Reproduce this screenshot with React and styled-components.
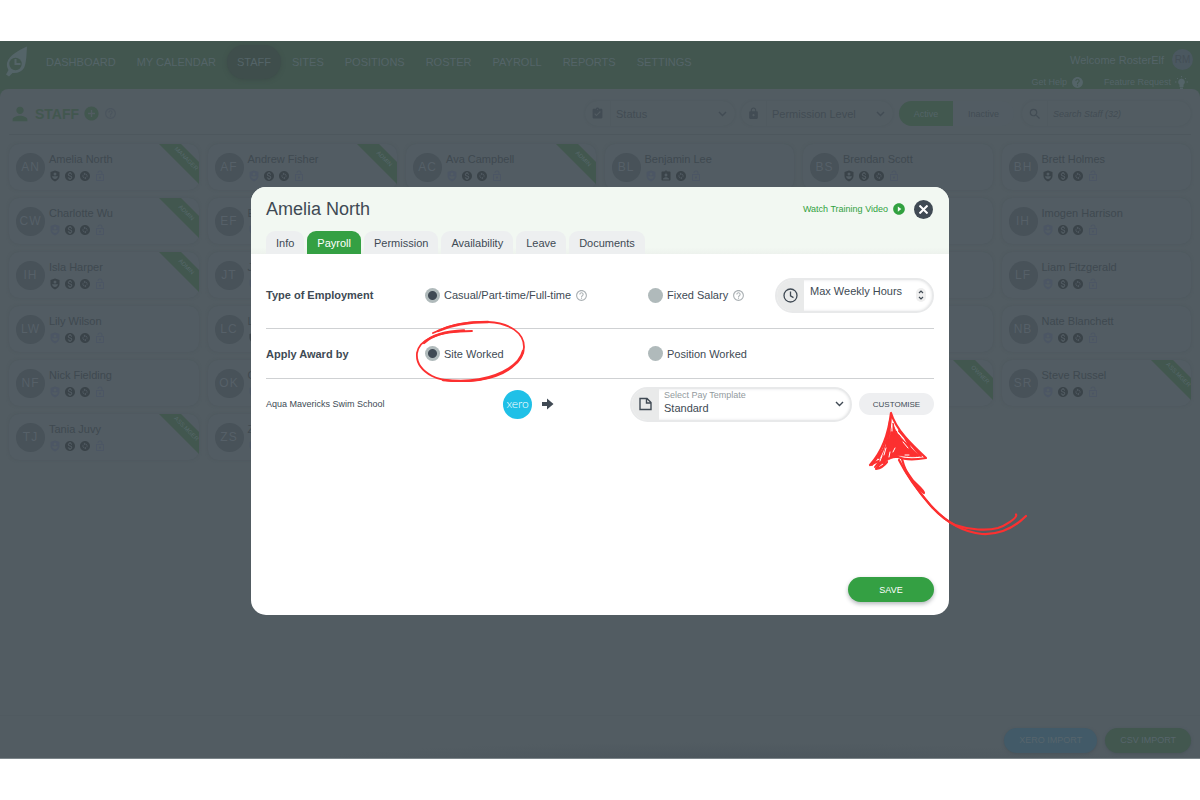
import { useState } from "react";
import styled, { createGlobalStyle } from "styled-components";
import {
  MdPerson,
  MdAddCircle,
  MdHelpOutline,
  MdHelp,
  MdAssignmentTurnedIn,
  MdAssignmentInd,
  MdLock,
  MdLockOpen,
  MdSearch,
  MdMonetizationOn,
  MdChangeCircle,
  MdPlayCircleFilled,
} from "react-icons/md";

const GlobalStyle = createGlobalStyle`
  * {
    box-sizing: border-box;
  }
  body {
    margin: 0;
    background-color: #fff;
    font-family: "Liberation Sans", Arial, sans-serif;
    font-size: 11px;
  }
  button, input, select {
    font-family: inherit;
  }
`;

const Page = styled.div`
  position: relative;
  min-height: 100vh;
  padding: 41px 0;
  display: flex;
  flex-direction: column;
`;

const Shell = styled.div`
  flex: 1;
  display: flex;
  flex-direction: column;
  background-color: #42564f;
  border-bottom: 1px solid #7c858a;
`;

const Header = styled.header`
  height: 48px;
  display: flex;
  justify-content: space-between;
  color: #546468;
`;

const HeaderLeft = styled.div`
  display: flex;
  align-items: flex-start;
  padding: 4px 0 0 5px;
`;

const Nav = styled.nav`
  display: flex;
  gap: 1px;
  margin-left: 7px;
`;

const NavLink = styled.a`
  height: 34px;
  padding: 0 10px;
  border-radius: 17px;
  display: flex;
  align-items: center;
  color: inherit;
  text-decoration: none;
  white-space: nowrap;
  background-color: ${(props) => (props.$active ? "#3f4e4c" : "transparent")};
  box-shadow: ${(props) => (props.$active ? "0 1px 4px #3d4d49" : "none")};
`;

const HeaderRight = styled.div`
  display: flex;
  flex-direction: column;
  align-items: flex-end;
  gap: 6px;
  padding: 8px 7px 0 0;
`;

const Welcome = styled.div`
  display: flex;
  align-items: center;
  gap: 8px;
`;

const UserBadge = styled.div`
  width: 21px;
  height: 21px;
  border-radius: 50%;
  display: flex;
  align-items: center;
  justify-content: center;
  background-color: #4b5860;
  color: #434e55;
  font-size: 10px;
`;

const HelpLinks = styled.div`
  display: flex;
  gap: 20px;
  padding-right: 5px;
`;

const HelpLink = styled.a`
  display: flex;
  align-items: center;
  gap: 4px;
  height: 12px;
  color: inherit;
  font-size: 9px;
  text-decoration: none;
`;

const Content = styled.main`
  flex: 1;
  display: flex;
  flex-direction: column;
  border-radius: 8px 8px 0 0;
  background-color: #525c62;
`;

const Toolbar = styled.div`
  height: 46px;
  margin: 0 9px;
  padding-top: 4px;
  display: flex;
  align-items: center;
  border-bottom: 1px solid #4d575d;
`;

const PageTitle = styled.h1`
  flex: 1;
  margin: 0;
  display: flex;
  align-items: center;
  gap: 4px;
  color: #42574f;
  font-size: 14px;
`;

const Filters = styled.div`
  display: flex;
  align-items: center;
  gap: 6px;
`;

const Filter = styled.label`
  width: ${(props) => props.$width};
  height: 25px;
  padding-right: 8px;
  display: flex;
  align-items: center;
  border-radius: 13px;
  box-shadow: 0 0 2px #4d575d;
  color: #424c54;
`;

const FilterIcon = styled.span`
  width: 26px;
  height: 25px;
  flex-shrink: 0;
  display: flex;
  align-items: center;
  justify-content: center;
  border-right: 1px solid #505a60;
`;

const FilterSelect = styled.select`
  flex: 1;
  min-width: 0;
  padding: 0 5px;
  border: 0;
  appearance: none;
  background: transparent;
  color: inherit;
  font-size: 11px;
`;

const Toggle = styled.div`
  display: flex;
  height: 25px;
  margin-right: 2px;
`;

const ToggleButton = styled.button`
  width: ${(props) => (props.$active ? "54px" : "61px")};
  border: 0;
  border-radius: ${(props) => (props.$active ? "13px 0 0 13px" : "0 13px 13px 0")};
  background-color: ${(props) => (props.$active ? "#42584f" : "#525c63")};
  color: ${(props) => (props.$active ? "#546468" : "#424c54")};
  font-size: 9px;
`;

const SearchInput = styled.input`
  flex: 1;
  min-width: 0;
  padding: 0 5px;
  border: 0;
  background: transparent;
  font-size: 9px;
  font-style: italic;
  &::placeholder {
    color: #424c54;
    opacity: 1;
  }
`;

const StaffGrid = styled.div`
  display: grid;
  grid-template-columns: repeat(6, 1fr);
  gap: 8px 9px;
  padding: 9px 9px 0;
`;

const Card = styled.article`
  position: relative;
  height: 46px;
  padding: 0 0 0 7px;
  display: flex;
  align-items: center;
  gap: 4px;
  border-radius: 10px;
  background-color: #525c63;
  box-shadow: 0 0 3px #4d575d;
`;

const Avatar = styled.div`
  width: 29px;
  height: 29px;
  border-radius: 50%;
  flex-shrink: 0;
  display: flex;
  align-items: center;
  justify-content: center;
  background-color: #485259;
  color: #566068;
  font-size: 12px;
  letter-spacing: 1px;
`;

const CardInfo = styled.div`
  display: flex;
  flex-direction: column;
  gap: 5px;
  color: #3f4950;
  line-height: 12px;
`;

const Badges = styled.div`
  display: flex;
  gap: 3px;
`;

const Badge = styled.span`
  display: flex;
  color: ${(props) => (props.$on ? "#3a4349" : "#4c5664")};
`;

const Ribbon = styled.svg`
  position: absolute;
  top: 0;
  right: 0;
  fill: #42574f;
`;

const Footer = styled.footer`
  height: 43px;
  padding: 6px 9px 0;
  display: flex;
  align-items: center;
  justify-content: flex-end;
  gap: 8px;
  margin-top: auto;
  border-top: 1px solid #505a60;
  background: radial-gradient(ellipse 420px 20px at 60% 110%, #4b555c, #525c62);
`;

const ImportButton = styled.button`
  height: 25px;
  padding: 0 15px;
  border: 0;
  border-radius: 13px;
  background-color: ${(props) => props.$color};
  box-shadow: 0 1px 3px #49535a;
  color: #57656c;
  font-size: 9px;
`;

const Overlay = styled.div`
  position: absolute;
  inset: 0;
  padding: 41px 16px;
  display: flex;
  align-items: center;
  justify-content: center;
`;

const Modal = styled.section`
  position: relative;
  top: 1px;
  width: 100%;
  max-width: 698px;
  min-height: 428px;
  display: flex;
  flex-direction: column;
  border-radius: 15px;
  background-color: #fff;
  color: #404a54;
`;

const ModalHeader = styled.div`
  padding: 11px 16px 0 15px;
  border-radius: 15px 15px 0 0;
  background: linear-gradient(#f2f8f2 90%, #edf2ed);
`;

const TitleRow = styled.div`
  height: 22px;
  margin-bottom: 11px;
  display: flex;
  align-items: center;
`;

const ModalTitle = styled.h2`
  flex: 1;
  margin: 0;
  font-size: 18px;
  font-weight: 400;
`;

const VideoLink = styled.a`
  display: flex;
  align-items: center;
  gap: 4px;
  color: #31a140;
  font-size: 9px;
  text-decoration: none;
`;

const CloseButton = styled.button`
  width: 19px;
  height: 19px;
  margin-left: 8px;
  padding: 0;
  border: 0;
  border-radius: 50%;
  display: flex;
  align-items: center;
  justify-content: center;
  background-color: #404a54;
`;

const Tabs = styled.div`
  display: flex;
  gap: 3px;
`;

const Tab = styled.button`
  height: 23px;
  padding: 0 10px;
  border: 0;
  border-radius: 9px 9px 0 0;
  background-color: ${(props) => (props.$active ? "#34a043" : "#edeff0")};
  color: ${(props) => (props.$active ? "#fff" : "#404a54")};
  font-size: 11px;
`;

const Form = styled.form`
  flex: 1;
  display: flex;
  flex-direction: column;
  padding: 0 15px 13px;
`;

const Row = styled.div`
  min-height: ${(props) => (props.$tall ? "75px" : "50px")};
  padding-top: ${(props) => (props.$tall ? "8px" : "0")};
  display: grid;
  grid-template-columns: 159fr 223fr 127fr 159fr;
  align-items: center;
  border-bottom: 1px solid #cfd1d3;
`;

const RowLabel = styled.div`
  font-weight: 700;
`;

const RadioLabel = styled.label`
  display: flex;
  align-items: center;
  gap: 4px;
  white-space: nowrap;
  svg {
    color: #abb1b4;
  }
`;

const Radio = styled.input`
  width: 15px;
  height: 15px;
  margin: 0;
  border-radius: 50%;
  appearance: none;
  background-color: #b0babb;
  &:checked {
    background-image: radial-gradient(circle, #404a54 4px, transparent 5px);
  }
`;

const Pill = styled.div`
  height: 35px;
  display: flex;
  align-items: center;
  overflow: hidden;
  border: 2px solid #e8e9ea;
  border-radius: 18px;
  box-shadow: inset 0 0 3px #e2e3e4;
`;

const PillIcon = styled.span`
  width: 27px;
  height: 35px;
  flex-shrink: 0;
  display: flex;
  align-items: center;
  justify-content: center;
  background-color: #e9eaea;
`;

const HoursInput = styled.input`
  flex: 1;
  min-width: 0;
  height: 31px;
  padding: 0 0 8px 6px;
  border: 0;
  appearance: textfield;
  background: transparent;
  color: #404a54;
  font-size: 11px;
  &::placeholder {
    color: #404a54;
    opacity: 1;
  }
  &::-webkit-inner-spin-button {
    display: none;
  }
`;

const Stepper = styled.svg`
  flex-shrink: 0;
  margin-right: 6px;
`;

const SiteRow = styled.div`
  min-height: 50px;
  display: grid;
  grid-template-columns: 237fr 127fr 222fr 82fr;
  align-items: center;
`;

const SiteName = styled.div`
  font-size: 9px;
`;

const Mapping = styled.div`
  display: flex;
  align-items: center;
  gap: 9px;
`;

const XeroLogo = styled.div`
  width: 29px;
  height: 29px;
  padding-bottom: 2px;
  border-radius: 50%;
  display: flex;
  align-items: center;
  justify-content: center;
  background-color: #1fc0e7;
  color: #fff;
  font-family: Lato, sans-serif;
  font-size: 12px;
  font-weight: 300;
`;

const TemplateField = styled.div`
  flex: 1;
  min-width: 0;
  padding-left: 5px;
  display: flex;
  flex-direction: column;
`;

const TemplateLabel = styled.label`
  color: #929a9e;
  font-size: 9px;
  line-height: 11px;
`;

const TemplateSelect = styled.select`
  width: 100%;
  padding: 0;
  border: 0;
  appearance: none;
  background: transparent;
  color: #404a54;
  font-size: 11px;
  line-height: 14px;
  margin-bottom: 3px;
`;

const SelectArrow = styled.span`
  display: flex;
  flex-shrink: 0;
  margin-right: 6px;
`;

const CustomiseButton = styled.button`
  height: 22px;
  margin-left: 7px;
  padding: 0;
  border: 0;
  border-radius: 11px;
  background-color: #eeeff1;
  color: #404a54;
  font-size: 8px;
`;

const SaveButton = styled.button`
  width: 86px;
  height: 25px;
  margin: auto 0 0 auto;
  border: 0;
  border-radius: 13px;
  background-color: #34a043;
  box-shadow: 0 2px 4px rgba(64, 74, 84, 0.4);
  color: #fff;
  font-size: 9px;
`;

const Markup = styled.svg`
  position: absolute;
  top: 0;
  left: 0;
  overflow: visible;
  pointer-events: none;
  fill: none;
  stroke: #fc3030;
  stroke-linecap: round;
  stroke-linejoin: round;
`;

const navItems = ["DASHBOARD", "MY CALENDAR", "STAFF", "SITES", "POSITIONS", "ROSTER", "PAYROLL", "REPORTS", "SETTINGS"];

const tabs = ["Info", "Payroll", "Permission", "Availability", "Leave", "Documents"];

const staff = [
  { initials: "AN", name: "Amelia North", role: "MANAGER", shield: true },
  { initials: "AF", name: "Andrew Fisher", role: "ADMIN" },
  { initials: "AC", name: "Ava Campbell", role: "ADMIN" },
  { initials: "BL", name: "Benjamin Lee", salary: true },
  { initials: "BS", name: "Brendan Scott", shield: true },
  { initials: "BH", name: "Brett Holmes", shield: true },
  { initials: "CW", name: "Charlotte Wu", role: "ADMIN" },
  { initials: "EF", name: "E" },
  {},
  {},
  {},
  { initials: "IH", name: "Imogen Harrison" },
  { initials: "IH", name: "Isla Harper", role: "ADMIN", shield: true },
  { initials: "JT", name: "J" },
  {},
  {},
  {},
  { initials: "LF", name: "Liam Fitzgerald" },
  { initials: "LW", name: "Lily Wilson" },
  { initials: "LC", name: "L", shield: true },
  {},
  {},
  {},
  { initials: "NB", name: "Nate Blanchett" },
  { initials: "NF", name: "Nick Fielding" },
  { initials: "OK", name: "O" },
  {},
  {},
  { role: "OWNER" },
  { initials: "SR", name: "Steve Russel", role: "ASS.MGER" },
  { initials: "TJ", name: "Tania Juvy", role: "ASS.MGER" },
  { initials: "ZS", name: "Z" },
];

function Logo() {
  return (
    <svg width="24" height="32" viewBox="0 0 24 32">
      <path d="M22 1.500C15 4.500 4 10 2 18c-.5 3 .5 5 1.500 7L1 29.500l3 2 3.500-3.500c5 .5 9-1 11.500-5 2.500-5 2.500-14 3-21.500z" fill="#546468" />
      <circle cx="10.500" cy="19" r="6.200" fill="#42564f" />
      <path d="M10.500 14v5h5" fill="none" stroke="#546468" strokeWidth="2" />
    </svg>
  );
}

function ShieldUser() {
  return (
    <svg width="12" height="12" viewBox="0 0 24 24" fill="currentColor" fillRule="evenodd">
      <path d="M12 1 3 4v8c0 5 4 9 9 11 5-2 9-6 9-11V4zM12 5a3 3 0 1 1 0 6 3 3 0 0 1 0-6zM6 12.500h12c-.5 3-3 5-6 6-3-1-5.500-3-6-6z" />
    </svg>
  );
}

function Bulb() {
  return (
    <svg width="13" height="13" viewBox="0 0 13 13" fill="currentColor">
      <path d="M6.500 2.500a3.500 3.500 0 0 0-2 6.300V11h4V8.800a3.500 3.500 0 0 0-2-6.300zM5 11.500h3V13H5z" />
      <path d="M6.500 0v1.300M0 6h1.500M11.500 6H13M2 2l1 1M11 2l-1 1" stroke="currentColor" />
    </svg>
  );
}

function Chevron() {
  return (
    <svg width="9" height="6" viewBox="0 0 9 6" fill="none" stroke="currentColor" strokeWidth="1.400">
      <path d="M1 1l3.500 3.500L8 1" />
    </svg>
  );
}

function StaffCard({ person }) {
  return (
    <Card>
      {person.initials && (
        <>
          <Avatar>{person.initials}</Avatar>
          <CardInfo>
            {person.name}
            <Badges>
              <Badge $on={person.shield}><ShieldUser /></Badge>
              <Badge $on>{person.salary ? <MdAssignmentInd size={12} /> : <MdMonetizationOn size={12} />}</Badge>
              <Badge $on><MdChangeCircle size={12} /></Badge>
              <Badge><MdLockOpen size={12} /></Badge>
            </Badges>
          </CardInfo>
        </>
      )}
      {person.role && (
        <Ribbon width="40" height="40" viewBox="0 0 40 40">
          <path d="M0 0h22l18 18v22z" />
          <text x="26" y="16" fontSize="6" textAnchor="middle" fill="#56676a" transform="rotate(45 26 16)">{person.role}</text>
        </Ribbon>
      )}
    </Card>
  );
}

function HandMarkup() {
  return (
    <Markup width="698" height="428" viewBox="251 187 698 428" aria-hidden="true">
      <path strokeWidth="1.800" d="M433 333C449 325 469 321 488 322C510 323 524 333 524 347C524 362 506 376 479 380C461 382 443 382 432 376C421 370 416 362 417 353C419 341 434 331 472 331" />
      <path strokeWidth="2.400" d="M438 331C451 325 468 322 488 322M523 351C520 364 503 375 479 379.500C465 382 454 381 443 380M424 343C432 335 448 331 464 330.500" />
      <g strokeWidth="2.200">
        <path d="M1026 516C1013 529 999 535 982 534C961 532 945 521 931 506C918 491 907 476 899 460" />
        <path d="M1016 514.500C1018 518 1004 526 998 528C987 531 970 530 955 525C938 517 922 496 912 481C907 474 904 467 902 459" />
        <path d="M906 472C911 481 925 490 924 493C920 491 913 481 905 469" />
        <path d="M891 413C889 430 883 451 870 465M891 413C896 430 912 445 926 458C914 460 905 460 898 457C890 456 880 460 870 465M891 413C890 438 886 456 876 469C881 468 884 466 887 462" />
      </g>
      <path fill="#fc3030" strokeWidth="1" d="M893 425C897 436 912 449 920 456C910 458 904 455 897 456C889 459 883 462 877 468C879 463 885 455 886 448C889 441 890 433 893 425z" />
      <path strokeWidth="2" d="M890 420C889 432 885 447 879 458M872 465L882 451M875 467L888 450M884 464L888 440M893 424L895 451M905 438L914 455M899 431L921 456" />
      <path stroke="#fff" strokeWidth="1" d="M892 424v7M896 429l3 5M886 448l-2 7M890 452l-1 5M895 448l-2 4M882 456l-2 5M903 442l5 6M905 455h4" />
    </Markup>
  );
}

function App() {
  const [tab, setTab] = useState("Payroll");

  return (
    <Page>
      <GlobalStyle />
      <Shell>
        <Header>
          <HeaderLeft>
            <Logo />
            <Nav>
              {navItems.map((item) => (
                <NavLink key={item} href="#" $active={item === "STAFF"}>{item}</NavLink>
              ))}
            </Nav>
          </HeaderLeft>
          <HeaderRight>
            <Welcome>Welcome RosterElf <UserBadge>RM</UserBadge></Welcome>
            <HelpLinks>
              <HelpLink href="#">Get Help <MdHelp size={13} /></HelpLink>
              <HelpLink href="#">Feature Request <Bulb /></HelpLink>
            </HelpLinks>
          </HeaderRight>
        </Header>
        <Content>
          <Toolbar>
            <PageTitle>
              <MdPerson size={22} />
              STAFF
              <MdAddCircle size={17} />
              <MdHelpOutline size={13} color="#4b555e" />
            </PageTitle>
            <Filters>
              <Filter $width="150px">
                <FilterIcon><MdAssignmentTurnedIn size={13} /></FilterIcon>
                <FilterSelect aria-label="Status"><option>Status</option></FilterSelect>
                <Chevron />
              </Filter>
              <Filter $width="152px">
                <FilterIcon><MdLock size={13} /></FilterIcon>
                <FilterSelect aria-label="Permission Level"><option>Permission Level</option></FilterSelect>
                <Chevron />
              </Filter>
              <Toggle>
                <ToggleButton $active>Active</ToggleButton>
                <ToggleButton>Inactive</ToggleButton>
              </Toggle>
              <Filter $width="169px">
                <FilterIcon><MdSearch size={14} /></FilterIcon>
                <SearchInput aria-label="Search Staff" placeholder="Search Staff (32)" />
              </Filter>
            </Filters>
          </Toolbar>
          <StaffGrid>
            {staff.map((person, i) => <StaffCard key={i} person={person} />)}
          </StaffGrid>
          <Footer>
            <ImportButton $color="#425a68">XERO IMPORT</ImportButton>
            <ImportButton $color="#42574f">CSV IMPORT</ImportButton>
          </Footer>
        </Content>
      </Shell>
      <Overlay>
        <Modal role="dialog" aria-labelledby="modal-title">
          <ModalHeader>
            <TitleRow>
              <ModalTitle id="modal-title">Amelia North</ModalTitle>
              <VideoLink href="#">Watch Training Video <MdPlayCircleFilled size={14} /></VideoLink>
              <CloseButton aria-label="Close">
                <svg width="9" height="9" viewBox="0 0 9 9" stroke="#fff" strokeWidth="2">
                  <path d="M.5.5l8 8M8.500.5l-8 8" />
                </svg>
              </CloseButton>
            </TitleRow>
            <Tabs>
              {tabs.map((item) => (
                <Tab key={item} $active={item === tab} onClick={() => setTab(item)}>{item}</Tab>
              ))}
            </Tabs>
          </ModalHeader>
          <Form onSubmit={(e) => e.preventDefault()}>
            <Row $tall>
              <RowLabel>Type of Employment</RowLabel>
              <RadioLabel>
                <Radio type="radio" name="employment" defaultChecked />
                Casual/Part-time/Full-time
                <MdHelpOutline size={13} />
              </RadioLabel>
              <RadioLabel>
                <Radio type="radio" name="employment" />
                Fixed Salary
                <MdHelpOutline size={13} />
              </RadioLabel>
              <Pill>
                <PillIcon>
                  <svg width="15" height="15" viewBox="0 0 15 15" fill="none" stroke="#404a54" strokeWidth="1.300">
                    <circle cx="7.500" cy="7.500" r="6.500" />
                    <path d="M7.500 3.500v4.300l3 1.800" />
                  </svg>
                </PillIcon>
                <HoursInput type="number" aria-label="Max Weekly Hours" placeholder="Max Weekly Hours" />
                <Stepper width="10" height="14" viewBox="0 0 10 14" fill="none" stroke="#404a54">
                  <rect width="10" height="14" rx="5" fill="#efefef" stroke="none" />
                  <path d="M3 5l2-2 2 2M3 9l2 2 2-2" strokeWidth="1.200" />
                </Stepper>
              </Pill>
            </Row>
            <Row>
              <RowLabel>Apply Award by</RowLabel>
              <RadioLabel>
                <Radio type="radio" name="award" defaultChecked />
                Site Worked
              </RadioLabel>
              <RadioLabel>
                <Radio type="radio" name="award" />
                Position Worked
              </RadioLabel>
            </Row>
            <SiteRow>
              <SiteName>Aqua Mavericks Swim School</SiteName>
              <Mapping>
                <XeroLogo>xero</XeroLogo>
                <svg width="13" height="12" viewBox="0 0 13 12" fill="#404a54">
                  <path d="M1 4h5V.5L12.500 6 6 11.500V8H1z" />
                </svg>
              </Mapping>
              <Pill>
                <PillIcon>
                  <svg width="13" height="14" viewBox="0 0 13 14" fill="none" stroke="#404a54" strokeWidth="1.400">
                    <path d="M1 1.500h7L12 5.500v7H1zM7.500 1.500V6H12" />
                  </svg>
                </PillIcon>
                <TemplateField>
                  <TemplateLabel htmlFor="template">Select Pay Template</TemplateLabel>
                  <TemplateSelect id="template"><option>Standard</option></TemplateSelect>
                </TemplateField>
                <SelectArrow><Chevron /></SelectArrow>
              </Pill>
              <CustomiseButton type="button">CUSTOMISE</CustomiseButton>
            </SiteRow>
            <SaveButton>SAVE</SaveButton>
          </Form>
          <HandMarkup />
        </Modal>
      </Overlay>
    </Page>
  );
}

export default App;
